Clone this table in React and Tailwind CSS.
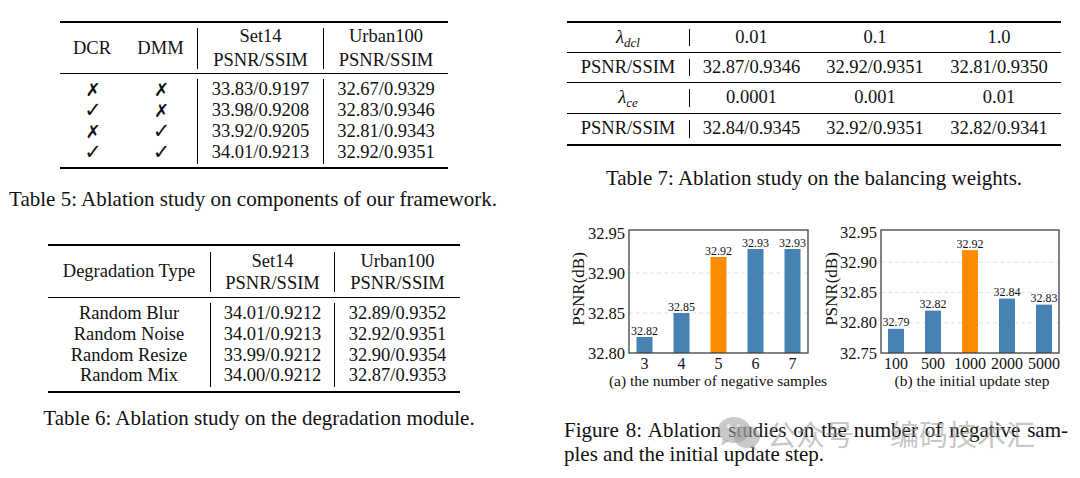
import React from "react";

const serif = "font-['Liberation_Serif','Times_New_Roman',serif]";

function Div({ cls = "" }) {
  return <div className={"w-px bg-black self-stretch " + cls} />;
}

function Check({ ok }) {
  return ok ? (
    <span className="font-['DejaVu_Sans',sans-serif] font-bold text-[21px] leading-[21px] h-[21px]">✓</span>
  ) : (
    <span className="font-['DejaVu_Sans',sans-serif] font-bold text-[18px] leading-[21px] h-[21px]">✗</span>
  );
}

function Table5() {
  const rows = [
    [false, false, "33.83/0.9197", "32.67/0.9329"],
    [true, false, "33.98/0.9208", "32.83/0.9346"],
    [false, true, "33.92/0.9205", "32.81/0.9343"],
    [true, true, "34.01/0.9213", "32.92/0.9351"],
  ];
  return (
    <div className="ml-[60px] w-[388px] border-t-2 border-b-2 border-black text-[18.5px]">
      <div className="flex h-[51px] border-b border-black">
        <div className="w-[64px] flex items-center justify-center pt-[2px]">DCR</div>
        <div className="w-[73px] flex items-center justify-center pt-[2px]">DMM</div>
        <Div cls="mt-[5px] mb-[4px]" />
        <div className="w-[125px] flex flex-col items-center justify-center leading-[24px]">
          <span>Set14</span>
          <span>PSNR/SSIM</span>
        </div>
        <Div cls="mt-[5px] mb-[4px]" />
        <div className="w-[124px] flex flex-col items-center justify-center leading-[24px]">
          <span>Urban100</span>
          <span>PSNR/SSIM</span>
        </div>
      </div>
      <div className="flex">
        <div className="w-[66px] flex flex-col items-center pt-[5px] pb-[4px]">
          {rows.map((r, i) => (
            <Check key={i} ok={r[0]} />
          ))}
        </div>
        <div className="w-[71px] flex flex-col items-center pt-[5px] pb-[4px]">
          {rows.map((r, i) => (
            <Check key={i} ok={r[1]} />
          ))}
        </div>
        <Div cls="mt-[5px] mb-[3px]" />
        <div className="w-[125px] flex flex-col items-center pt-[5px] pb-[4px] leading-[21px]">
          {rows.map((r, i) => (
            <span key={i}>{r[2]}</span>
          ))}
        </div>
        <Div cls="mt-[5px] mb-[3px]" />
        <div className="w-[124px] flex flex-col items-center pt-[5px] pb-[4px] leading-[21px]">
          {rows.map((r, i) => (
            <span key={i}>{r[3]}</span>
          ))}
        </div>
      </div>
    </div>
  );
}

function Table6() {
  const rows = [
    ["Random Blur", "34.01/0.9212", "32.89/0.9352"],
    ["Random Noise", "34.01/0.9213", "32.92/0.9351"],
    ["Random Resize", "33.99/0.9212", "32.90/0.9354"],
    ["Random Mix", "34.00/0.9212", "32.87/0.9353"],
  ];
  return (
    <div className="ml-[48px] w-[412px] border-t-2 border-b-2 border-black text-[18.5px]">
      <div className="flex h-[52px] border-b border-black">
        <div className="w-[162px] flex items-center justify-center">Degradation Type</div>
        <Div cls="mt-[6px] mb-[5px]" />
        <div className="w-[123px] flex flex-col items-center justify-center leading-[22px]">
          <span>Set14</span>
          <span>PSNR/SSIM</span>
        </div>
        <Div cls="mt-[6px] mb-[5px]" />
        <div className="w-[125px] flex flex-col items-center justify-center leading-[22px]">
          <span>Urban100</span>
          <span>PSNR/SSIM</span>
        </div>
      </div>
      <div className="flex leading-[20.75px]">
        <div className="w-[162px] flex flex-col items-center pt-[5px] pb-[5px]">
          {rows.map((r, i) => (
            <span key={i}>{r[0]}</span>
          ))}
        </div>
        <Div cls="mt-[5px] mb-[4px]" />
        <div className="w-[123px] flex flex-col items-center pt-[5px] pb-[5px]">
          {rows.map((r, i) => (
            <span key={i}>{r[1]}</span>
          ))}
        </div>
        <Div cls="mt-[5px] mb-[4px]" />
        <div className="w-[125px] flex flex-col items-center pt-[5px] pb-[5px]">
          {rows.map((r, i) => (
            <span key={i}>{r[2]}</span>
          ))}
        </div>
      </div>
    </div>
  );
}

function Lambda({ sub }) {
  return (
    <span>
      <span className="italic">λ</span>
      <span className="italic text-[13px] relative top-[4px]">{sub}</span>
    </span>
  );
}

function Table7Row({ first, cells, h, border }) {
  return (
    <div className={"flex " + h + (border ? " border-b border-black" : "")}>
      <div className="w-[122px] flex items-center justify-center">{first}</div>
      <Div cls="my-[6px]" />
      <div className="w-[123px] flex items-center justify-center">{cells[0]}</div>
      <div className="w-[124px] flex items-center justify-center">{cells[1]}</div>
      <div className="w-[124px] flex items-center justify-center">{cells[2]}</div>
    </div>
  );
}

function Table7() {
  return (
    <div className="ml-[7px] w-[494px] border-t-2 border-b-2 border-black text-[18.5px]">
      <Table7Row first={<Lambda sub="dcl" />} cells={["0.01", "0.1", "1.0"]} h="h-[30px]" border />
      <Table7Row first="PSNR/SSIM" cells={["32.87/0.9346", "32.92/0.9351", "32.81/0.9350"]} h="h-[30px]" border />
      <Table7Row first={<Lambda sub="ce" />} cells={["0.0001", "0.001", "0.01"]} h="h-[31px]" border />
      <Table7Row first="PSNR/SSIM" cells={["32.84/0.9345", "32.92/0.9351", "32.82/0.9341"]} h="h-[30px]" />
    </div>
  );
}

const BLUE = "#4682b4";
const ORANGE = "#ff8c00";

function Chart({ cats, vals, hi, ticks, yMin, ppu, axL, axR, barX0, xlabel, xlabelX, ylabelX, tickRight }) {
  const axT = 11;
  const axB = 134;
  const y = (v) => axB - (v - yMin) * ppu;
  return (
    <svg width="250" height="180" className="overflow-visible shrink-0" style={{ fontFamily: "'Liberation Serif', serif" }}>
      {ticks.slice(1, -1).map((t) => (
        <line key={t} x1={axL} x2={axR} y1={y(t)} y2={y(t)} stroke="#dedede" strokeWidth="0.9" strokeDasharray="4 3" />
      ))}
      {vals.map((v, i) => {
        const cx = barX0 + i * 37;
        const top = y(v);
        return (
          <g key={i}>
            <rect x={cx - 8} y={top} width="16" height={axB - top} fill={i === hi ? ORANGE : BLUE} />
            <text x={cx} y={top - 2.5} fontSize="12" textAnchor="middle" fill="#111">
              {v.toFixed(2)}
            </text>
            <text x={cx} y={144} fontSize="16" textAnchor="middle" dominantBaseline="central" fill="#111">
              {cats[i]}
            </text>
          </g>
        );
      })}
      <rect x={axL} y={axT} width={axR - axL} height={axB - axT} fill="none" stroke="#404040" strokeWidth="1.3" />
      {ticks.map((t) => (
        <text key={t} x={tickRight} y={y(t)} fontSize="16.5" textAnchor="end" dominantBaseline="central" fill="#111">
          {t.toFixed(2)}
        </text>
      ))}
      <text x={xlabelX} y={161} fontSize="15.5" textAnchor="middle" dominantBaseline="central" fill="#111">
        {xlabel}
      </text>
      <text
        x={ylabelX}
        y={70}
        fontSize="17"
        textAnchor="middle"
        dominantBaseline="central"
        fill="#111"
        transform={`rotate(-90 ${ylabelX} 70)`}
      >
        PSNR(dB)
      </text>
    </svg>
  );
}

function WeChatIcon() {
  return (
    <svg width="44" height="34" viewBox="0 0 44 34">
      <g fill="#9c9c9c" fillOpacity="0.55">
        <ellipse cx="17" cy="14" rx="16" ry="13" />
        <path d="M6 23 L4 30 L12 25 Z" />
        <ellipse cx="30" cy="21" rx="13" ry="11" />
        <path d="M37 29 L40 34 L32 31 Z" />
      </g>
      <g fill="#ffffff" fillOpacity="0.6">
        <circle cx="11.5" cy="10" r="2" />
        <circle cx="21.5" cy="10" r="2" />
      </g>
    </svg>
  );
}

export default function App() {
  return (
    <div className={"relative w-[1080px] h-[478px] bg-white text-[#111] overflow-hidden flex " + serif}>
      <div className="w-[560px] pt-[21px]">
        <Table5 />
        <div className="w-[506px] mt-[18px] text-center text-[21px] leading-[24px] whitespace-nowrap">
          Table 5: Ablation study on components of our framework.
        </div>
        <div className="mt-[33px]">
          <Table6 />
        </div>
        <div className="w-[518px] mt-[13px] text-center text-[21px] leading-[24px] whitespace-nowrap">
          Table 6: Ablation study on the degradation module.
        </div>
      </div>
      <div className="flex-1 pt-[21px]">
        <Table7 />
        <div className="ml-[7px] w-[494px] mt-[20px] text-center text-[21px] leading-[24px] whitespace-nowrap">
          Table 7: Ablation study on the balancing weights.
        </div>
        <div className="ml-[10px] mt-[29px] flex">
          <Chart
            cats={["3", "4", "5", "6", "7"]}
            vals={[32.82, 32.85, 32.92, 32.93, 32.93]}
            hi={2}
            ticks={[32.8, 32.85, 32.9, 32.95]}
            yMin={32.8}
            ppu={800}
            axL={59}
            axR={238}
            barX0={74.5}
            xlabel="(a) the number of negative samples"
            xlabelX={148}
            ylabelX={8}
            tickRight={55}
          />
          <Chart
            cats={["100", "500", "1000", "2000", "5000"]}
            vals={[32.79, 32.82, 32.92, 32.84, 32.83]}
            hi={2}
            ticks={[32.75, 32.8, 32.85, 32.9, 32.95]}
            yMin={32.75}
            ppu={605}
            axL={61}
            axR={239}
            barX0={76}
            xlabel="(b) the initial update step"
            xlabelX={152}
            ylabelX={11}
            tickRight={57}
          />
        </div>
        <div className="ml-[4px] mt-[19px] w-[504px] text-[21px] leading-[24px]">
          <div className="text-justify [text-align-last:justify] whitespace-nowrap">
            Figure 8: Ablation studies on the number of negative sam-
          </div>
          <div className="whitespace-nowrap">ples and the initial update step.</div>
        </div>
      </div>
      <div className="absolute left-[717px] top-[416px] flex items-center pointer-events-none font-['Noto_Sans_CJK_SC',sans-serif] text-[29px] leading-[34px] text-[rgba(150,150,150,0.55)]">
        <WeChatIcon />
        <span className="ml-[6px]">公众号</span>
        <span className="ml-[36px]">编码技术汇</span>
      </div>
    </div>
  );
}
